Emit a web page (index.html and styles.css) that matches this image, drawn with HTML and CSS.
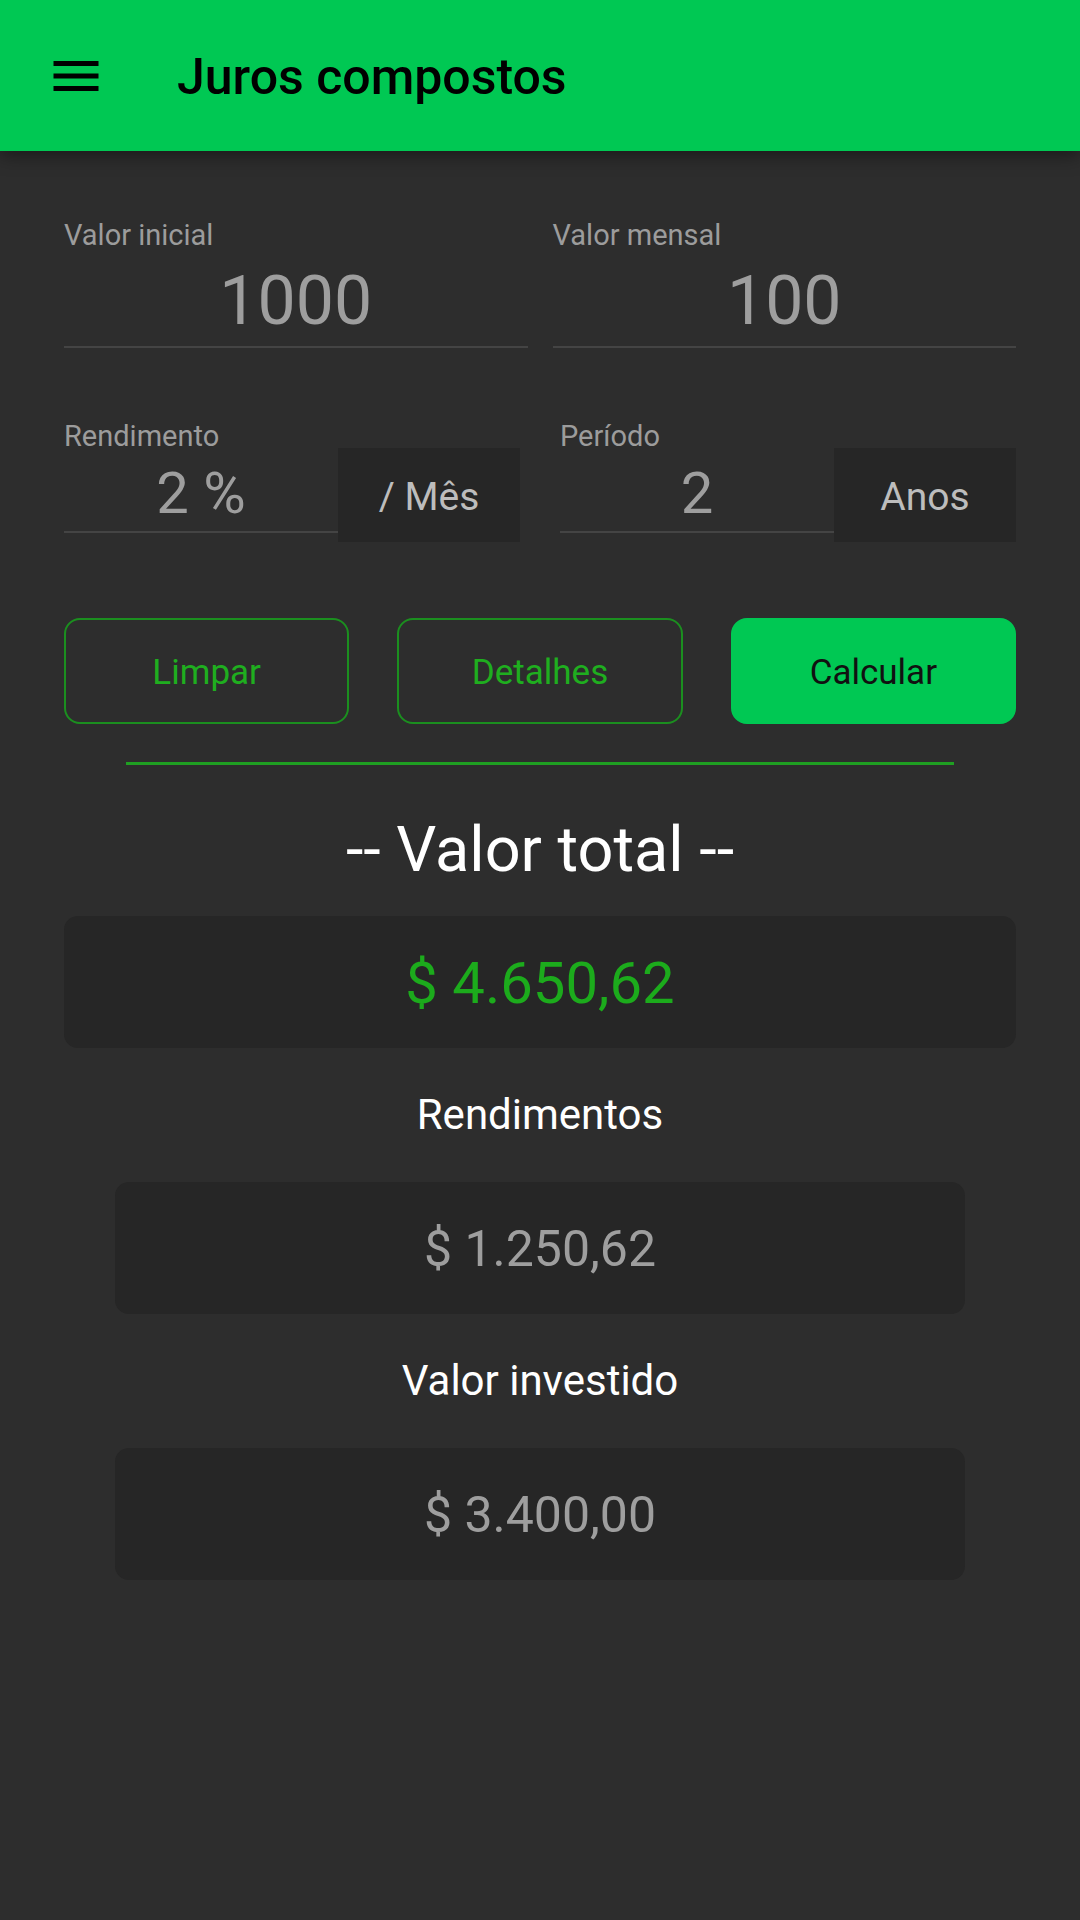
FILE: index.html
```html
<!DOCTYPE html>
<html lang="pt">
<head>
<meta charset="utf-8">
<title>Juros compostos</title>
<link rel="stylesheet" href="styles.css">
</head>
<body>
<header class="appbar">
  <svg class="menu-icon" viewBox="0 0 24 24" width="60" height="60" aria-hidden="true">
    <path d="M3 18h18v-2H3v2zm0-5h18v-2H3v2zm0-7v2h18V6H3z" fill="#000"/>
  </svg>
  <h1 class="title">Juros compostos</h1>
</header>
<main class="content">
  <section class="row-top">
    <div class="field">
      <div class="label">Valor inicial</div>
      <div class="value value-lg">1000</div>
    </div>
    <div class="field">
      <div class="label">Valor mensal</div>
      <div class="value value-lg">100</div>
    </div>
  </section>
  <section class="row-mid">
    <div class="group">
      <div class="field field-grow">
        <div class="label">Rendimento</div>
        <div class="value value-md">2 %</div>
      </div>
      <div class="unit">/ Mês</div>
    </div>
    <div class="group">
      <div class="field field-grow">
        <div class="label">Período</div>
        <div class="value value-md">2</div>
      </div>
      <div class="unit">Anos</div>
    </div>
  </section>
  <section class="buttons">
    <button class="btn btn-outline">Limpar</button>
    <button class="btn btn-outline">Detalhes</button>
    <button class="btn btn-fill">Calcular</button>
  </section>
  <div class="divider"></div>
  <h2 class="total-title">-- Valor total --</h2>
  <div class="result result-main">$ 4.650,62</div>
  <h3 class="sub-title">Rendimentos</h3>
  <div class="result result-sub">$ 1.250,62</div>
  <h3 class="sub-title">Valor investido</h3>
  <div class="result result-sub">$ 3.400,00</div>
</main>
</body>
</html>
```
FILE: styles.css
```css
* { box-sizing: border-box; }
html, body {
  margin: 0;
  padding: 0;
}
body {
  width: 1080px;
  height: 1920px;
  background: #2d2d2d;
  font-family: Roboto, "Liberation Sans", sans-serif;
  overflow: hidden;
}
.appbar {
  position: relative;
  z-index: 2;
  height: 151px;
  background: #00c853;
  display: flex;
  align-items: center;
  padding-left: 46px;
  box-shadow: 0 4px 18px rgba(0, 0, 0, 0.45);
}
.menu-icon { display: block; flex: none; }
.title {
  margin: 0 0 0 71px;
  font-size: 50px;
  font-weight: 500;
  color: #000;
  line-height: 60px;
  padding-top: 2px;
}
.content {
  padding: 0 64px;
  display: flex;
  flex-direction: column;
}
.row-top {
  display: grid;
  grid-template-columns: 1fr 1fr;
  column-gap: 25px;
  margin-top: 67px;
}
.field {
  display: flex;
  flex-direction: column;
  border-bottom: 2px solid #444444;
}
.label {
  font-size: 29px;
  line-height: 34px;
  color: #9c9c9c;
}
.value {
  color: #9e9e9e;
  text-align: center;
}
.value-lg {
  font-size: 68px;
  line-height: 80px;
  margin-top: 9px;
  padding-bottom: 5px;
}
.row-mid {
  display: grid;
  grid-template-columns: 1fr 1fr;
  column-gap: 40px;
  margin-top: 71px;
}
.group {
  display: flex;
  align-items: flex-start;
}
.field-grow { flex: 1; }
.value-md {
  font-size: 58px;
  line-height: 70px;
  margin-top: 5px;
  padding-bottom: 3px;
}
.unit {
  flex: none;
  width: 182px;
  height: 94px;
  margin-top: 29px;
  padding-top: 4px;
  background: #262626;
  color: #bdbdbd;
  font-size: 39px;
  line-height: 40px;
  display: flex;
  align-items: center;
  justify-content: center;
}
.buttons {
  display: grid;
  grid-template-columns: repeat(3, 1fr);
  column-gap: 48px;
  margin-top: 76px;
}
.btn {
  height: 106px;
  border-radius: 16px;
  font-family: Roboto, "Liberation Sans", sans-serif;
  font-size: 35px;
  line-height: 40px;
  padding: 4px 0 0;
  cursor: pointer;
}
.btn-outline {
  background: transparent;
  border: 2px solid #1b8f1f;
  color: #1fae1f;
}
.btn-fill {
  background: #00c853;
  border: 2px solid #00c853;
  color: #111;
}
.divider {
  height: 3px;
  background: #1f9f22;
  margin: 38px 62px 0;
}
.total-title {
  margin: 50px 0 0;
  font-size: 63px;
  font-weight: 400;
  line-height: 70px;
  color: #fff;
  text-align: center;
}
.result {
  height: 132px;
  background: #262626;
  border-radius: 14px;
  display: flex;
  align-items: center;
  justify-content: center;
}
.result-main {
  margin-top: 31px;
  font-size: 58px;
  color: #1cab1c;
  padding-top: 2px;
}
.sub-title {
  margin: 42px 0 0;
  font-size: 42px;
  font-weight: 400;
  line-height: 50px;
  color: #fff;
  text-align: center;
}
.result-sub {
  margin: 42px 51px 0;
  font-size: 50px;
  color: #9e9e9e;
  padding-top: 2px;
}
```
